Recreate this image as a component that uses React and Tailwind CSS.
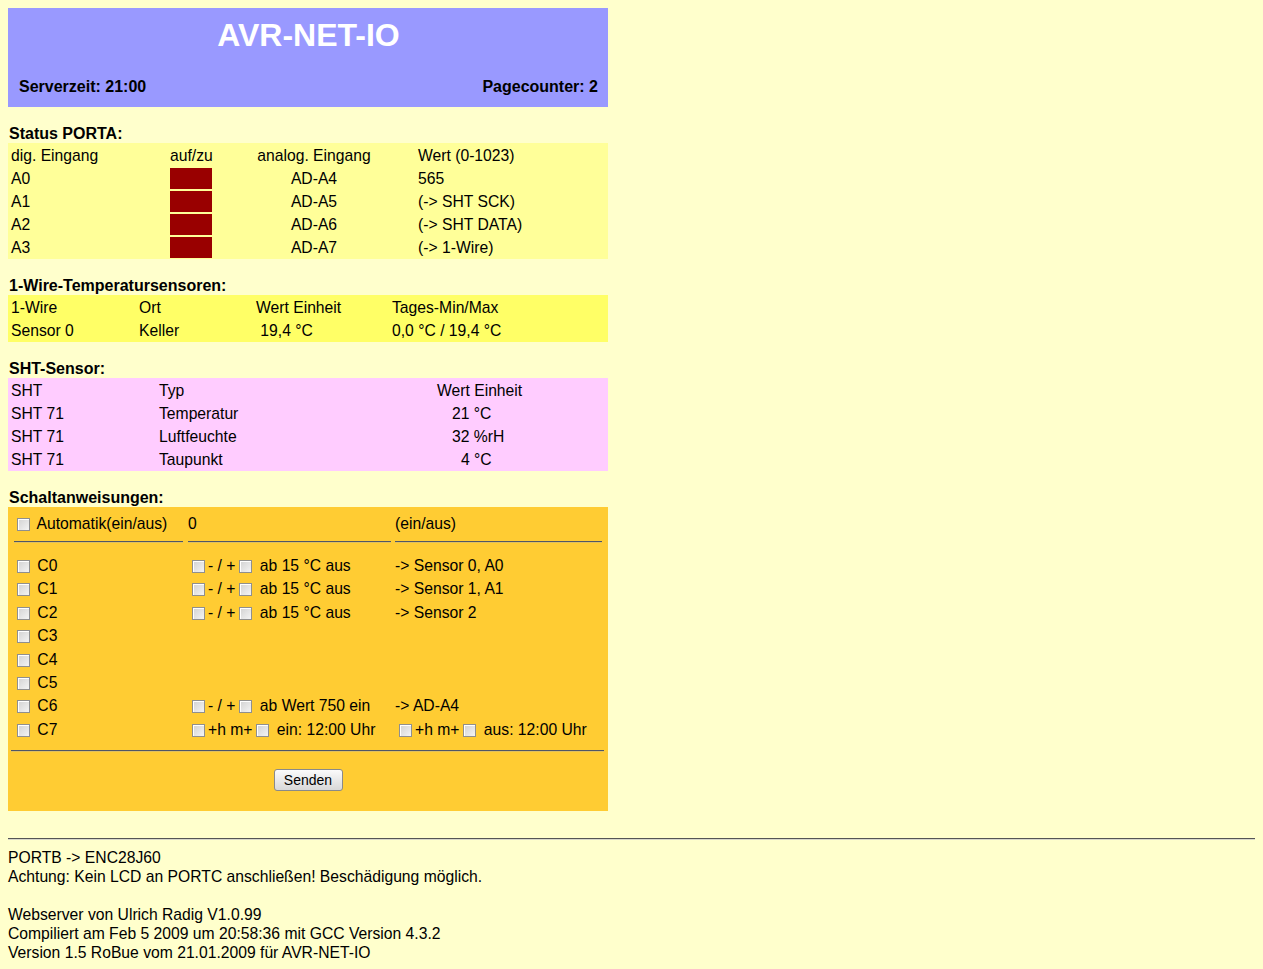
const font = { fontFamily: '"Liberation Sans", Arial, sans-serif' };

const Cb = () => (
  <span className="inline-block w-[13px] h-[13px] ml-[4px] mr-[3px] align-[-2px] border border-[#8f8f8f] bg-gradient-to-br from-[#d2d2d2] to-[#f4f4f4] shadow-[inset_1px_1px_0_#fff]" />
);

const Heading = ({ children }) => (
  <div className="mt-[17px] h-[19px] leading-[19px] pl-[1px] font-bold text-[16px]">{children}</div>
);

const portaRows = [
  ['A0', 'AD-A4', '565'],
  ['A1', 'AD-A5', '(-> SHT SCK)'],
  ['A2', 'AD-A6', '(-> SHT DATA)'],
  ['A3', 'AD-A7', '(-> 1-Wire)'],
];

const shtRows = [
  ['SHT 71', 'Temperatur', '21 °C', 'pl-[18px]'],
  ['SHT 71', 'Luftfeuchte', '32 %rH', 'pl-[18px]'],
  ['SHT 71', 'Taupunkt', '4 °C', 'pl-[27px]'],
];

const Row = ({ className = '', children }) => (
  <div className={'grid h-[23px] items-center ' + className}>{children}</div>
);

const SwitchRow = ({ label, mid, right }) => (
  <div className="grid grid-cols-[171px_203px_1fr] gap-x-[4px] h-[23.4px] items-center whitespace-nowrap">
    <div><Cb /> {label}</div>
    <div>{mid}</div>
    <div>{right}</div>
  </div>
);

const Rule = ({ className = '' }) => (
  <div className={'border-t border-b border-t-[#4f5666] border-b-[#e0c060] ' + className} />
);

export default function App() {
  return (
    <div className="min-h-[969px] bg-[#ffffcc] text-black text-[15.7px] p-[8px]" style={font}>
      <div className="w-[600px]">
        {/* Kopf */}
        <div className="h-[99px] bg-[#9999ff] flex flex-col justify-between pt-[9px] pb-[11px] pl-[11px] pr-[10px]">
          <div className="text-center text-white font-bold text-[32px] leading-[37px]">AVR-NET-IO</div>
          <div className="flex justify-between font-bold text-[16px] leading-[18px]">
            <span>Serverzeit: 21:00</span>
            <span>Pagecounter: 2</span>
          </div>
        </div>

        <Heading>Status PORTA:</Heading>
        <div className="bg-[#ffff99] pt-[1px]">
          <Row className="grid-cols-[162px_42px_204px_1fr]">
            <div className="pl-[3px]">dig. Eingang</div>
            <div className="text-center">auf/zu</div>
            <div className="text-center">analog. Eingang</div>
            <div className="pl-[2px]">Wert (0-1023)</div>
          </Row>
          {portaRows.map(([d, a, w]) => (
            <Row key={d} className="grid-cols-[162px_42px_204px_1fr]">
              <div className="pl-[3px]">{d}</div>
              <div className="h-[21px] bg-[#990000]" />
              <div className="text-center">{a}</div>
              <div className="pl-[2px]">{w}</div>
            </Row>
          ))}
        </div>

        <Heading>1-Wire-Temperatursensoren:</Heading>
        <div className="bg-[#ffff66] pt-[1px]">
          <Row className="grid-cols-[128px_117px_136px_1fr]">
            <div className="pl-[3px]">1-Wire</div>
            <div className="pl-[3px]">Ort</div>
            <div className="pl-[3px]">Wert Einheit</div>
            <div className="pl-[3px]">Tages-Min/Max</div>
          </Row>
          <Row className="grid-cols-[128px_117px_136px_1fr]">
            <div className="pl-[3px]">Sensor 0</div>
            <div className="pl-[3px]">Keller</div>
            <div className="pl-[3px]">{'\u00a019,4 °C'}</div>
            <div className="pl-[3px]">0,0 °C / 19,4 °C</div>
          </Row>
        </div>

        <Heading>SHT-Sensor:</Heading>
        <div className="bg-[#ffccff] pt-[1px]">
          <Row className="grid-cols-[148px_278px_1fr]">
            <div className="pl-[3px]">SHT</div>
            <div className="pl-[3px]">Typ</div>
            <div className="pl-[3px]">Wert Einheit</div>
          </Row>
          {shtRows.map(([s, t, w, pl]) => (
            <Row key={t} className="grid-cols-[148px_278px_1fr]">
              <div className="pl-[3px]">{s}</div>
              <div className="pl-[3px]">{t}</div>
              <div className={pl}>{w}</div>
            </Row>
          ))}
        </div>

        <Heading>Schaltanweisungen:</Heading>
        <div className="bg-[#ffcc33] pt-[5px] pb-[20px] pl-[5px] pr-[5px]">
          <div className="grid grid-cols-[171px_203px_1fr] gap-x-[4px] h-[23px] items-center whitespace-nowrap">
            <div><Cb /> Automatik(ein/aus)</div>
            <div>0</div>
            <div>(ein/aus)</div>
          </div>
          <div className="grid grid-cols-[171px_203px_1fr] gap-x-[4px] mt-[6px] mb-[11px]">
            <Rule className="ml-[1px] mr-[1px]" />
            <Rule />
            <Rule className="mr-[1px]" />
          </div>
          <SwitchRow label="C0" mid={<><Cb />- / +<Cb /> ab 15 °C aus</>} right="-> Sensor 0, A0" />
          <SwitchRow label="C1" mid={<><Cb />- / +<Cb /> ab 15 °C aus</>} right="-> Sensor 1, A1" />
          <SwitchRow label="C2" mid={<><Cb />- / +<Cb /> ab 15 °C aus</>} right="-> Sensor 2" />
          <SwitchRow label="C3" />
          <SwitchRow label="C4" />
          <SwitchRow label="C5" />
          <SwitchRow label="C6" mid={<><Cb />- / +<Cb /> ab Wert 750 ein</>} right="-> AD-A4" />
          <SwitchRow label="C7" mid={<><Cb />+h m+<Cb /> ein: 12:00 Uhr</>} right={<><Cb />+h m+<Cb /> aus: 12:00 Uhr</>} />
          <Rule className="mt-[9px] ml-[-2px] mr-[-1px]" />
          <div className="flex justify-center mt-[17px]">
            <button
              type="button"
              className="w-[69px] h-[22px] text-[14px] leading-[20px] border border-[#8a8a8a] rounded-[3px] bg-gradient-to-b from-[#fbfbfb] to-[#d8d8d8] text-black"
              style={font}
            >
              Senden
            </button>
          </div>
        </div>
      </div>

      <div className="mt-[27px] border-t border-b border-t-[#555555] border-b-[#d8d8c8]" />
      <div className="mt-[8px] leading-[19px]">
        <div>PORTB -&gt; ENC28J60</div>
        <div>Achtung: Kein LCD an PORTC anschließen! Beschädigung möglich.</div>
        <div className="h-[19px]" />
        <div>Webserver von Ulrich Radig V1.0.99</div>
        <div>Compiliert am Feb 5 2009 um 20:58:36 mit GCC Version 4.3.2</div>
        <div>Version 1.5 RoBue vom 21.01.2009 für AVR-NET-IO</div>
      </div>
    </div>
  );
}
